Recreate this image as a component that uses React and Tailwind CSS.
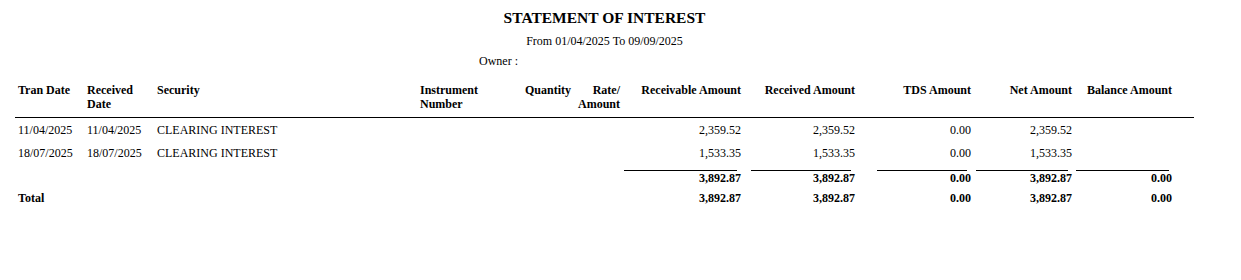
const cols = "grid grid-cols-[68px_70px_263px_104px_55px_49px_121px_114px_116px_101px_100px_18px]";

const rows = [
  { tran: "11/04/2025", recd: "11/04/2025", security: "CLEARING INTEREST", receivable: "2,359.52", received: "2,359.52", tds: "0.00", net: "2,359.52" },
  { tran: "18/07/2025", recd: "18/07/2025", security: "CLEARING INTEREST", receivable: "1,533.35", received: "1,533.35", tds: "0.00", net: "1,533.35" },
];

function TotalRow({ label, lined }) {
  return (
    <div className={`${cols} font-bold leading-[13px]`}>
      <div className="pl-[3px]">{label}</div>
      <div />
      <div />
      <div />
      <div />
      <div />
      <div className="pr-1 text-right">
        {lined && <div className="mb-px mr-1 h-px bg-black" />}
        3,892.87
      </div>
      <div className="pr-1 text-right">
        {lined && <div className="mb-px ml-[6px] mr-1 h-px bg-black" />}
        3,892.87
      </div>
      <div className="pr-1 text-right">
        {lined && <div className="mb-px ml-[18px] mr-1 h-px bg-black" />}
        0.00
      </div>
      <div className="pr-1 text-right">
        {lined && <div className="mb-px ml-px mr-1 h-px bg-black" />}
        3,892.87
      </div>
      <div className="pr-1 text-right">
        {lined && <div className="mb-px mr-[3px] h-px bg-black" />}
        0.00
      </div>
      <div />
    </div>
  );
}

export default function App() {
  return (
    <main className="h-[280px] w-[1241px] bg-white font-['Liberation_Serif',serif] text-[12px] text-black">
      <div className="ml-[15px] w-[1179px]">
        <h1 className="pt-[9px] text-center text-[15.5px] font-bold leading-[17px]">STATEMENT OF INTEREST</h1>
        <p className="mt-[9px] text-center leading-[13px]">From 01/04/2025 To 09/09/2025</p>
        <p className="mt-[7px] pl-[464px] leading-[13px]">Owner :</p>

        <div className={`${cols} mt-[15px] pb-[6px] font-bold leading-[14px]`}>
          <div className="pl-[3px]">Tran Date</div>
          <div className="pl-1">Received<br />Date</div>
          <div className="pl-1">Security</div>
          <div className="pl-1">Instrument<br />Number</div>
          <div className="pr-1 text-right">Quantity</div>
          <div className="pr-1 text-right">Rate/<br />Amount</div>
          <div className="pr-1 text-right">Receivable Amount</div>
          <div className="pr-1 text-right">Received Amount</div>
          <div className="pr-1 text-right">TDS Amount</div>
          <div className="pr-1 text-right">Net Amount</div>
          <div className="pr-1 text-right">Balance Amount</div>
          <div />
        </div>
        <div className="h-px bg-black" />

        {rows.map((r) => (
          <div key={r.tran} className={`${cols} h-[23px] pt-[6px] leading-[13px]`}>
            <div className="pl-[3px]">{r.tran}</div>
            <div className="pl-1">{r.recd}</div>
            <div className="pl-1">{r.security}</div>
            <div />
            <div />
            <div />
            <div className="pr-1 text-right">{r.receivable}</div>
            <div className="pr-1 text-right">{r.received}</div>
            <div className="pr-1 text-right">{r.tds}</div>
            <div className="pr-1 text-right">{r.net}</div>
            <div />
            <div />
          </div>
        ))}

        <div className="pt-[6px]">
          <TotalRow label="" lined />
        </div>
        <div className="mt-[7px]">
          <TotalRow label="Total" />
        </div>
      </div>
    </main>
  );
}
